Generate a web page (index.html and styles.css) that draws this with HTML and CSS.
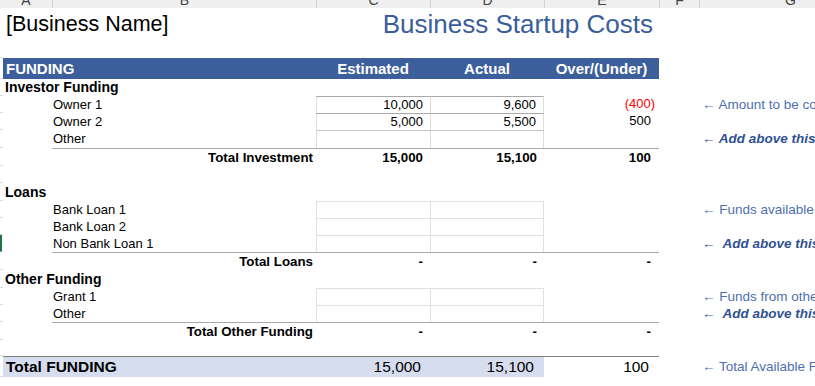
FILE: index.html
```html
<!DOCTYPE html>
<html lang="en">
<head>
<meta charset="utf-8">
<title>Business Startup Costs</title>
<link rel="stylesheet" href="styles.css">
</head>
<body>
<div class="colhdr">
  <div class="ch">A</div><div class="ch">B</div><div class="ch">C</div><div class="ch">D</div><div class="ch">E</div><div class="ch">F</div><div class="ch">G</div>
</div>
<div class="sheet">
  <div class="row r-title">
    <div class="gut"></div>
    <div class="cAB bizname">[Business Name]</div>
    <div class="cCE title">Business Startup Costs</div>
  </div>

  <div class="row r-head">
    <div class="gut"></div>
    <div class="cAB hd hd-label">FUNDING</div>
    <div class="cC hd">Estimated</div>
    <div class="cD hd">Actual</div>
    <div class="cE hd">Over/(Under)</div>
  </div>

  <div class="row r-sec">
    <div class="gut"></div>
    <div class="cAB sec">Investor Funding</div>
  </div>
  <div class="row r-data">
    <div class="gut"></div>
    <div class="cB lbl">Owner 1</div>
    <div class="cC num in inv">10,000</div>
    <div class="cD num in inv inD">9,600</div>
    <div class="cE num numE"><span class="neg">(400)</span></div>
    <div class="cG note">← Amount to be contributed by owners</div>
  </div>
  <div class="row r-data">
    <div class="gut"></div>
    <div class="cB lbl">Owner 2</div>
    <div class="cC num in inv">5,000</div>
    <div class="cD num in inv inD">5,500</div>
    <div class="cE num numE">500</div>
  </div>
  <div class="row r-last">
    <div class="gut"></div>
    <div class="cB lbl">Other</div>
    <div class="cC num in inv3"></div>
    <div class="cD num in inv3 inD"></div>
    <div class="cG note note-add">← Add above this line</div>
  </div>
  <div class="row r-tot">
    <div class="gut"></div>
    <div class="cB tot tlabel">Total Investment</div>
    <div class="cC tot num">15,000</div>
    <div class="cD tot num">15,100</div>
    <div class="cE tot num numE">100</div>
  </div>
  <div class="row r-blank">
    <div class="gut"></div>
  </div>

  <div class="row r-sec">
    <div class="gut"></div>
    <div class="cAB sec">Loans</div>
  </div>
  <div class="row r-data">
    <div class="gut"></div>
    <div class="cB lbl">Bank Loan 1</div>
    <div class="cC num in lt"></div>
    <div class="cD num in lt inD"></div>
    <div class="cG note">← Funds available from loans</div>
  </div>
  <div class="row r-data">
    <div class="gut"></div>
    <div class="cB lbl">Bank Loan 2</div>
    <div class="cC num in lt"></div>
    <div class="cD num in lt inD"></div>
  </div>
  <div class="row r-data">
    <div class="gut gut-sel"></div>
    <div class="cB lbl">Non Bank Loan 1</div>
    <div class="cC num in lt"></div>
    <div class="cD num in lt inD"></div>
    <div class="cG note note-add">←&nbsp; Add above this line</div>
  </div>
  <div class="row r-tot">
    <div class="gut"></div>
    <div class="cB tot tlabel">Total Loans</div>
    <div class="cC tot num">-</div>
    <div class="cD tot num">-</div>
    <div class="cE tot num numE">-</div>
  </div>

  <div class="row r-sec">
    <div class="gut"></div>
    <div class="cAB sec">Other Funding</div>
  </div>
  <div class="row r-data">
    <div class="gut"></div>
    <div class="cB lbl">Grant 1</div>
    <div class="cC num in lt"></div>
    <div class="cD num in lt inD"></div>
    <div class="cG note">← Funds from other sources</div>
  </div>
  <div class="row r-data">
    <div class="gut"></div>
    <div class="cB lbl">Other</div>
    <div class="cC num in lt"></div>
    <div class="cD num in lt inD"></div>
    <div class="cG note note-add">←&nbsp; Add above this line</div>
  </div>
  <div class="row r-tot">
    <div class="gut"></div>
    <div class="cB tot tlabel">Total Other Funding</div>
    <div class="cC tot num">-</div>
    <div class="cD tot num">-</div>
    <div class="cE tot num numE">-</div>
  </div>
  <div class="row r-blank2">
    <div class="gut"></div>
  </div>

  <div class="row r-grand">
    <div class="gut"></div>
    <div class="cAB g gl">Total FUNDING</div>
    <div class="cC g gn gf">15,000</div>
    <div class="cD g gn gf">15,100</div>
    <div class="cE g gn">100</div>
    <div class="cG note note-grand">← Total Available Funding</div>
  </div>
</div>
</body>
</html>
```

FILE: styles.css
```css
html, body {
  margin: 0;
  padding: 0;
  overflow: hidden;
  background: #ffffff;
}

body {
  width: 815px;
  height: 386px;
  font-family: "Liberation Sans", Arial, sans-serif;
  color: #000000;
}

/* column header strip (cut off at the top) */
.colhdr {
  display: grid;
  grid-template-columns: 52px 264px 114px 114px 115px 40px 182px;
  height: 8px;
  background: #efefef;
  overflow: hidden;
}

.ch {
  display: flex;
  align-items: flex-end;
  justify-content: center;
  height: 8px;
  font-family: "Liberation Sans", Arial, sans-serif;
  font-size: 14px;
  line-height: 16px;
  color: #444444;
  border-left: 1px solid #d2d2d2;
}

.ch:first-child {
  border-left: none;
}

/* sheet grid */
.row {
  display: grid;
  grid-template-columns: 3px 49px 264px 114px 114px 115px 40px 1fr;
  white-space: nowrap;
}

.gut {
  grid-column: 1;
  box-sizing: border-box;
  border-bottom: 1px solid #dcdcdc;
}

.gut-sel {
  border-left: 2px solid #217346;
}

.cAB { grid-column: 2 / 4; }
.cB  { grid-column: 3; }
.cC  { grid-column: 4; }
.cD  { grid-column: 5; }
.cE  { grid-column: 6; }
.cCE { grid-column: 4 / 7; }
.cG  { grid-column: 8; }

.row > div {
  box-sizing: border-box;
  min-width: 0;
}

/* title row */
.r-title {
  height: 50px;
}

.bizname {
  font-size: 21.5px;
  line-height: 24px;
  padding-left: 3px;
  padding-top: 4px;
}

.title {
  font-size: 26px;
  line-height: 30px;
  color: #3a5d9c;
  text-align: right;
  padding-right: 6px;
  padding-top: 1px;
}

/* blue header bar */
.r-head {
  height: 20px;
}

.hd {
  background: #3c5f9c;
  color: #ffffff;
  font-weight: bold;
  font-size: 15px;
  line-height: 21px;
  text-align: center;
}

.hd-label {
  text-align: left;
  padding-left: 3px;
}

/* sections */
.r-sec {
  height: 18px;
}

.sec {
  font-weight: bold;
  font-size: 14px;
  line-height: 18px;
  padding-left: 2px;
}

.r-data {
  height: 17px;
}

.r-last {
  height: 18px;
}

.lbl {
  font-size: 13px;
  line-height: 17px;
  padding-left: 1px;
}

.num {
  font-size: 13px;
  line-height: 16px;
  text-align: right;
  padding-right: 7px;
}

.numE {
  padding-right: 8px;
}

.neg {
  color: #ff0000;
  margin-right: -4px;
}

/* input cells */
.in {
  border-left: 1px solid #dcdcdc;
  border-top: 1px solid #a8a8a8;
}

.inD {
  border-right: 1px solid #dcdcdc;
}

.inv {
  border-top-color: #a8a8a8;
}

.inv3 {
  border-top-color: #c4c4c4;
}

.lt {
  border-top-color: #e0e0e0;
  border-left-color: #e0e0e0;
}

.lt.inD {
  border-right-color: #e0e0e0;
}

/* total rows */
.r-tot {
  height: 18px;
}

.tot {
  border-top: 1px solid #a8a8a8;
  font-weight: bold;
  font-size: 13.33px;
  line-height: 17px;
}

.tlabel {
  text-align: right;
  padding-right: 3px;
}

.r-blank {
  height: 17px;
}

.r-blank2 {
  height: 16px;
}

/* grand total */
.r-grand {
  height: 21px;
}

.g {
  border-top: 1px solid #7f7f7f;
  font-size: 15.5px;
  line-height: 20px;
}

.gl {
  background: #d6ddee;
  font-weight: bold;
  padding-left: 3px;
}

.gn {
  text-align: right;
  padding-right: 10px;
}

.cC.gn {
  padding-right: 9px;
}

.gf {
  background: #d6ddee;
}

/* notes column */
.note {
  font-size: 13.5px;
  line-height: 17px;
  color: #4f6faf;
  padding-left: 3px;
}

.note-add {
  color: #2f5194;
  font-weight: bold;
  font-style: italic;
}

.note-grand {
  line-height: 21px;
}
```
